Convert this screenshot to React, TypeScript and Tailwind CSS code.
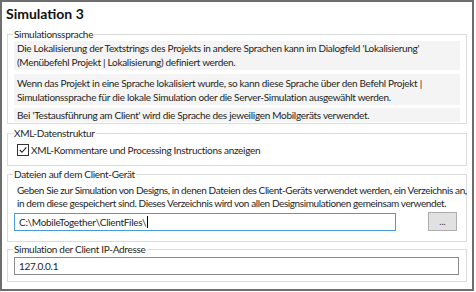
import React from 'react';

const font = { fontFamily: 'Lato, "Liberation Sans", sans-serif' };
const txt = 'text-[10px] tracking-[-0.3px] text-[#1e1e1e]';

const Group: React.FC<{ label: string; className?: string; children: React.ReactNode }> = ({ label, className, children }) => (
  <fieldset className={`min-w-0 border border-[#dcdcdc] mx-[5px] px-[6px] ${className || ''}`}>
    <legend className={`ml-[-1px] px-[1px] leading-[14px] ${txt}`}>{label}</legend>
    {children}
  </fieldset>
);

const Para: React.FC<{ className?: string; children: React.ReactNode }> = ({ className, children }) => (
  <p className={`bg-[#f4f4f4] px-[3px] leading-[14px] whitespace-nowrap ${txt} ${className || ''}`}>{children}</p>
);

export default function App() {
  return (
    <div className="w-[476px] h-[292px] bg-white" style={font}>
      <div className="w-[474px] h-[291px] border-2 border-[#6e6e6e] flex flex-col">
        <h1 className="px-[4px] pt-[3px] text-[14px] leading-[18px] font-bold text-[#111]">Simulation 3</h1>

        <Group label="Simulationssprache" className="mt-[4px] pb-[1px]">
          <div className="flex flex-col">
            <Para className="pb-[1px]">
              Die Lokalisierung der Textstrings des Projekts in andere Sprachen kann im Dialogfeld 'Lokalisierung'
              <br />
              (Menübefehl Projekt | Lokalisierung) definiert werden.
            </Para>
            <Para className="mt-[4px] pt-[2px] pb-[1px]">
              Wenn das Projekt in eine Sprache lokalisiert wurde, so kann diese Sprache über den Befehl Projekt |
              <br />
              Simulationssprache für die lokale Simulation oder die Server-Simulation ausgewählt werden.
            </Para>
            <Para className="mt-[3px]">Bei 'Testausführung am Client' wird die Sprache des jeweiligen Mobilgeräts verwendet.</Para>
          </div>
        </Group>

        <Group label="XML-Datenstruktur" className="mt-[2px] pb-[8px]">
          <label className={`flex items-center gap-[2px] pl-[3px] pt-[3px] leading-[14px] whitespace-nowrap ${txt}`}>
            <span className="w-[12px] h-[12px] border border-[#333] bg-white flex items-center justify-center">
              <svg width="10" height="10" viewBox="0 0 10 10">
                <path d="M1.8 5 L4 7.3 L8.3 2.3" fill="none" stroke="#222" strokeWidth="1.1" />
              </svg>
            </span>
            XML-Kommentare und Processing Instructions anzeigen
          </label>
        </Group>

        <Group label="Dateien auf dem Client-Gerät" className="mt-[1px] pb-[10px]">
          <p className="px-[3px] pt-[3px] leading-[13px] whitespace-nowrap text-[10px] tracking-[-0.4px] text-[#1e1e1e]">
            Geben Sie zur Simulation von Designs, in denen Dateien des Client-Geräts verwendet werden, ein Verzeichnis an,
            <br />
            in dem diese gespeichert sind. Dieses Verzeichnis wird von allen Designsimulationen gemeinsam verwendet.
          </p>
          <div className="flex items-center mt-[2px]">
            <div className={`w-[382px] h-[18px] border border-[#4a9ad8] px-[4px] leading-[16px] ${txt}`}>
              C:\MobileTogether\ClientFiles\<span className="border-l border-[#000] ml-[1px]"></span>
            </div>
            <button className="ml-auto w-[29px] h-[19px] bg-[#e1e1e1] border border-[#adadad] text-[9px] leading-[12px] text-[#333] mr-[3px]">
              ...
            </button>
          </div>
        </Group>

        <Group label="Simulation der Client IP-Adresse" className="mt-0 pb-[6px]">
          <div className={`mt-[1px] w-[445px] h-[18px] border border-[#8a8a8a] px-[4px] leading-[16px] ${txt}`}>
            127.0.0.1
          </div>
        </Group>
      </div>
    </div>
  );
}
